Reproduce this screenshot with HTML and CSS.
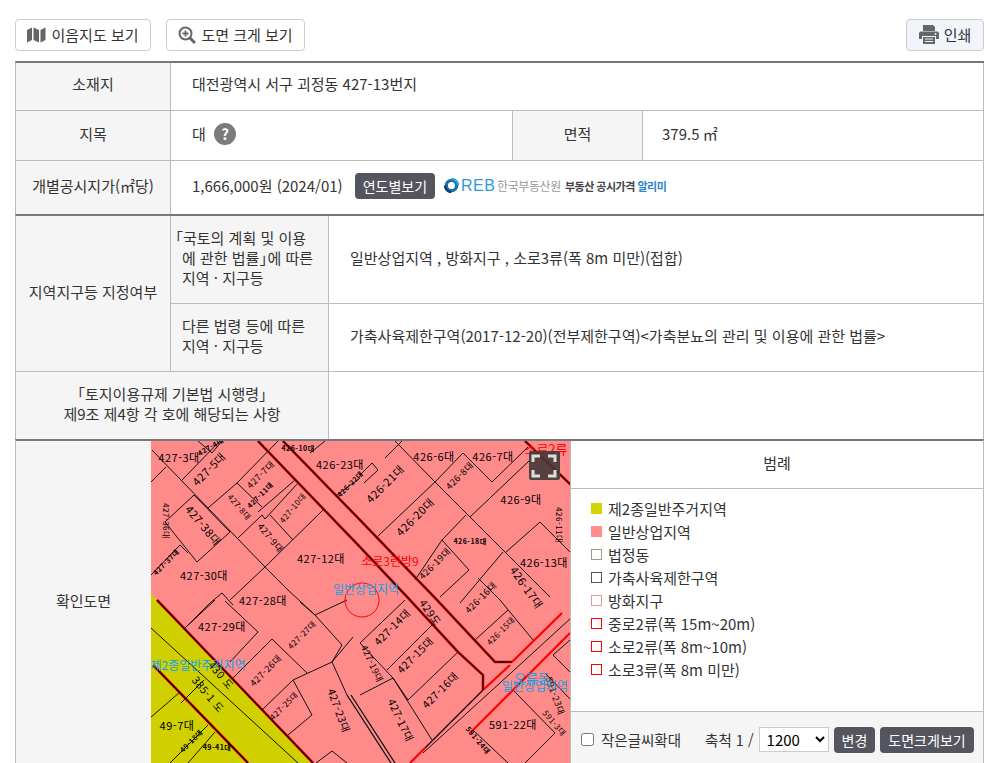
FILE: index.html
```html
<!DOCTYPE html>
<html lang="ko">
<head>
    <meta charset="UTF-8">
    <meta name="viewport" content="width=device-width, initial-scale=1.0">
    <title>토지이용계획 확인</title>
    <link rel="stylesheet" href="styles.css">
</head>
<body>
    <div class="container">
        <div class="toolbar">
            <button class="tool-btn btn-map">
                <svg class="ico" width="19" height="16" viewBox="0 0 19 16"><path d="M0 3 5 0.500V13L0 15.500ZM6.500 0.500 12 3V15.500L6.500 13ZM13.500 3 18.500 0.500V13L13.500 15.500Z" fill="#666"/></svg>
                이음지도 보기
            </button>
            <button class="tool-btn btn-zoom">
                <svg class="ico" width="18" height="18" viewBox="0 0 18 18"><circle cx="7.500" cy="7.500" r="6" fill="none" stroke="#666" stroke-width="2"/><path d="M12 12 17 17" stroke="#666" stroke-width="3"/><path d="M4.500 7.500H10.500M7.500 4.500V10.500" stroke="#666" stroke-width="1.800"/></svg>
                도면 크게 보기
            </button>
            <button class="tool-btn btn-print">
                <svg class="ico" width="20" height="19" viewBox="0 0 20 19"><path d="M4 0H14L16 2V6H4Z" fill="#666"/><path d="M2 6.500H18Q20 6.500 20 8.500V14H17V11H3V14H0V8.500Q0 6.500 2 6.500Z" fill="#666"/><path d="M4 12H16V19H4Z" fill="#666"/><path d="M6 14H14M6 16.500H14" stroke="#eef2f8" stroke-width="1"/><circle cx="16.500" cy="9" r="1" fill="#eef2f8"/></svg>
                인쇄
            </button>
        </div>

        <table class="info-table t-basic">
            <colgroup><col class="c155"><col class="c342"><col class="c130"><col></colgroup>
            <tr class="r48 up">
                <th>소재지</th>
                <td colspan="3">대전광역시 서구 괴정동 427-13번지</td>
            </tr>
            <tr class="r50">
                <th>지목</th>
                <td>대 <span class="help">?</span></td>
                <th>면적</th>
                <td class="area">379.5 ㎡</td>
            </tr>
            <tr class="r53 last">
                <th>개별공시지가(㎡당)</th>
                <td colspan="3">
                    <div class="price-line">
                        <span>1,666,000원 (2024/01)</span>
                        <button class="dark-btn">연도별보기</button>
                        <span class="reb">
                            <svg width="15" height="15" viewBox="0 0 16 16"><circle cx="8" cy="8" r="5.500" fill="none" stroke="#1d6fa8" stroke-width="3.500"/><path d="M8 1A7 7 0 0 1 15 8" fill="none" stroke="#2aa5dc" stroke-width="2.500"/><path d="M1 8A7 7 0 0 0 8 15" fill="none" stroke="#123f73" stroke-width="2.500"/></svg>
                            <span class="reb-mark">REB</span>
                            <span class="reb-name">한국부동산원</span>
                            <span class="reb-title">부동산 공시가격 <em>알리미</em></span>
                        </span>
                    </div>
                </td>
            </tr>
        </table>

        <table class="info-table t-zone">
            <colgroup><col class="c155"><col class="c158"><col></colgroup>
            <tr class="r88">
                <th rowspan="2">지역지구등 지정여부</th>
                <th class="law"><span class="hang">「</span>국토의 계획 및 이용<br>에 관한 법률<span class="hang-end">」</span>에 따른<br>지역 · 지구등</th>
                <td class="zone-val">일반상업지역 , 방화지구 , 소로3류(폭 8m 미만)(접합)</td>
            </tr>
            <tr class="r68">
                <th class="law">다른 법령 등에 따른<br>지역 · 지구등</th>
                <td class="zone-val">가축사육제한구역(2017-12-20)(전부제한구역)&lt;가축분뇨의 관리 및 이용에 관한 법률&gt;</td>
            </tr>
            <tr class="r67 last">
                <th colspan="2">「토지이용규제 기본법 시행령」<br>제9조 제4항 각 호에 해당되는 사항</th>
                <td></td>
            </tr>
        </table>

        <div class="plan">
            <div class="plan-label">확인도면</div>
            <div class="plan-map">
                <svg class="map-svg" width="420" height="322" viewBox="151 441 420 322">
                    <rect x="151" y="441" width="420" height="322" fill="#ff8a8a"/>
                    <polygon points="151,593 157,600 313,763 151,763" fill="#d0d000"/>

                    <!-- parcel lines -->
                    <path class="lot" d="M152 450 265 567 288 590 315 615 342 645M151 482 166 467M182 480 220 441M198 441 212 453 222 441M165 522 194 495 230 532 197 562ZM208 508 237 483 262 507M237 483 278 441M238 538 262 515 265 519 298 483 295 480 258 512M270 515 293 540M265 567 323 510M151 575 180 545 188 553M230 600 265 567M210 603 222 593 233 605M310 453 325 441M337 495 360 478"/>
                    <path class="lot" d="M395 441 435 482 470 517 503 550 550 597M360 475 372 463 378 470 364 483M377 537 435 482 463 453 492 482 528 447M470 517 530 460M415 580 442 540 469 570 440 597M442 540 466 515M460 603 503 552M505 553 540 522 571 553M478 578 500 600M403 440 385 458"/>
                    <path class="lot" d="M360 643 405 600M387 670 432 625M408 700 458 652M360 643 393 678 432 740M360 695 393 678M393 678 408 700M475 640 508 610M500 600 533 640M553 655 570 640M553 655 570 672M423 753 512 672 571 618M513 690 555 733 525 763M473 730 508 763M545 673 571 700"/>
                    <path class="lot" d="M185 628 215 600M185 628 210 603M225 601 258 632 230 662M233 678 272 639 307 673M300 602 315 615M293 680 312 715 288 735M332 662 353 637M342 645 332 662 293 680 262 710M332 662 347 695M315 615 347 600M150 718 180 692M170 763 208 725M188 763 215 732M316 763 332 751 347 763M151 628 298 763M204 680 181 703"/>
                    <path class="hatch" d="M347 695 391 763M351 695 395 763"/>

                    <!-- road edges -->
                    <path class="road-red" d="M512 662 562 613M483 690 510 665M570 633 470 733M425 748 410 763"/>
                    <path class="road-red edge" d="M258 441 360 547 410 600 458 652 483 675V690M283 441 360 520 437 600 495 662H512M157 600 313 763M153 665 248 763M525 441 571 485"/>
                    <path class="road" d="M258 441 360 547 410 600 458 652 483 675V690M283 441 360 520 437 600 495 662H512M157 600 313 763M153 665 248 763M483 690 425 748M525 441 571 485"/>

                    <circle cx="362" cy="600" r="17" fill="none" stroke="#f00" stroke-width="1"/>

                    <!-- parcel labels -->
                    <g class="lbl">
                        <text x="179" y="462">427-3대</text>
                        <text class="s7" transform="translate(212 449) rotate(-30)">427-4대</text>
                        <text transform="translate(212 472) rotate(-45)">427-5대</text>
                        <text class="s9" transform="translate(263 477) rotate(-45)">427-7대</text>
                        <text class="s8" transform="translate(237 509) rotate(50)">427-8대</text>
                        <text transform="translate(200 528) rotate(50)">427-38대</text>
                        <text class="s9" transform="translate(268 540) rotate(50)">427-9대</text>
                        <text class="s8" transform="translate(295 510) rotate(-50)">427-10대</text>
                        <text class="s7" transform="translate(262 497) rotate(-45)">427-11대</text>
                        <text class="s8" transform="translate(163 521) rotate(90)">427-36대</text>
                        <text class="s7" transform="translate(168 564) rotate(-45)">427-37대</text>
                        <text x="321" y="563">427-12대</text>
                        <text x="204" y="580">427-30대</text>
                        <text x="263" y="605">427-28대</text>
                        <text x="222" y="631">427-29대</text>
                        <text class="s9" transform="translate(268 673) rotate(-45)">427-26대</text>
                        <text class="s8" transform="translate(304 637) rotate(-45)">427-27대</text>
                        <text class="s8" transform="translate(286 708) rotate(-45)">427-25대</text>
                        <text class="s11" transform="translate(335 712) rotate(70)">427-23대</text>
                        <text x="177" y="730">49-7대</text>
                        <text class="s11" transform="translate(218 678) rotate(50)">430 도</text>
                        <text class="s11" transform="translate(205 697) rotate(50)">385-1 도</text>
                        <text class="s7" x="217" y="750">49-41대</text>
                        <text class="s7" transform="translate(193 743) rotate(-45)">49-18대</text>
                        <text class="s11" transform="translate(418 658) rotate(-45)">427-15대</text>
                        <text class="s11" transform="translate(395 630) rotate(-45)">427-14대</text>
                        <text class="s11" transform="translate(443 693) rotate(-45)">427-16대</text>
                        <text class="s11" transform="translate(397 722) rotate(65)">427-17대</text>
                        <text class="s9" transform="translate(369 665) rotate(65)">427-19대</text>
                        <text class="s11" transform="translate(427 615) rotate(55)">429도</text>
                        <text x="513" y="729">591-22대</text>
                        <text class="s7" x="298" y="451">426-10대</text>
                        <text class="s7" transform="translate(352 486) rotate(-45)">426-22대</text>
                        <text x="340" y="469">426-23대</text>
                        <text x="434" y="461">426-6대</text>
                        <text x="493" y="461">426-7대</text>
                        <text x="521" y="504">426-9대</text>
                        <text x="544" y="567">426-13대</text>
                        <text transform="translate(388 487) rotate(-45)">426-21대</text>
                        <text class="s9" transform="translate(462 478) rotate(-45)">426-8대</text>
                        <text transform="translate(418 520) rotate(-45)">426-20대</text>
                        <text class="s7" x="470" y="544">426-18대</text>
                        <text class="s9" transform="translate(437 566) rotate(-45)">426-19대</text>
                        <text transform="translate(523 590) rotate(55)">426-17대</text>
                        <text class="s9" transform="translate(483 600) rotate(-45)">426-16대</text>
                        <text class="s8" transform="translate(503 633) rotate(-45)">426-15대</text>
                        <text class="s8" transform="translate(556 525) rotate(90)">426-11대</text>
                        <text class="s8" transform="translate(552 725) rotate(50)">591-3대</text>
                        <text class="s9" transform="translate(552 697) rotate(70)">591-23대</text>
                        <text class="s7" transform="translate(476 742) rotate(50)">591-24대</text>
                    </g>
                    <text class="map-blue" x="366" y="594">일반상업지역</text>
                    <text class="map-red" x="390" y="566">소로3련방9</text>
                    <text class="map-blue" x="198" y="670">제2종일반주거지역</text>
                    <text class="map-blue big" x="532" y="683">오류동</text>
                    <text class="map-blue" x="535" y="691">일반상업지역</text>
                    <text class="map-red big" x="546" y="454">소로2류</text>
                </svg>
                <button class="full-btn" aria-label="전체화면">
                    <svg width="30" height="28" viewBox="0 0 30 28"><path d="M4 10V4H11M19 4H26V10M26 18V24H19M11 24H4V18" fill="none" stroke="#ddd" stroke-width="3"/></svg>
                </button>
            </div>
            <div class="plan-side">
                <div class="legend-title">범례</div>
                <ul class="legend">
                    <li><i class="sw sw-yellow"></i>제2종일반주거지역</li>
                    <li><i class="sw sw-pink"></i>일반상업지역</li>
                    <li><i class="sw sw-tan"></i>법정동</li>
                    <li><i class="sw sw-dark"></i>가축사육제한구역</li>
                    <li><i class="sw sw-rose"></i>방화지구</li>
                    <li><i class="sw sw-red"></i>중로2류(폭 15m~20m)</li>
                    <li><i class="sw sw-red"></i>소로2류(폭 8m~10m)</li>
                    <li><i class="sw sw-red"></i>소로3류(폭 8m 미만)</li>
                </ul>
                <div class="map-bar">
                    <label class="small-text"><input type="checkbox">작은글씨확대</label>
                    <span class="scale">축척 1 /</span>
                    <select class="scale-select"><option>1200</option></select>
                    <button class="dark-btn">변경</button>
                    <button class="dark-btn">도면크게보기</button>
                </div>
            </div>
        </div>
    </div>
</body>
</html>
```
FILE: styles.css
```css
* {
    margin: 0;
    padding: 0;
    box-sizing: border-box;
}

html, body {
    height: 763px;
    overflow: hidden;
}

body {
    font-family: "Noto Sans CJK KR", "Noto Sans", sans-serif;
    font-size: 15px;
    color: #333;
    background-color: #fff;
}

button, select {
    font-family: inherit;
}

.container {
    padding: 19px 9px 0 15px;
}

/* top buttons */
.toolbar {
    display: flex;
    gap: 15px;
    height: 42px;
}

.tool-btn {
    display: flex;
    align-items: center;
    justify-content: center;
    gap: 5px;
    height: 32px;
    padding-bottom: 1px;
    font-size: 15px;
    color: #333;
    background-color: #fff;
    border: 1px solid #ccc;
    border-radius: 4px;
}

.btn-map { width: 136px; }
.btn-zoom { width: 139px; }

.btn-print {
    width: 78px;
    margin-left: auto;
    background-color: #f1f5fb;
}

/* tables */
.info-table {
    width: 969px;
    table-layout: fixed;
    border-collapse: separate;
    border-spacing: 0;
    border-top: 2px solid #777;
    border-left: 1px solid #bbb;
}

.c155 { width: 155px; }
.c342 { width: 342px; }
.c130 { width: 130px; }
.c158 { width: 158px; }

.r48 { height: 48px; }
.r50 { height: 50px; }
.r53 { height: 53px; }
.r88 { height: 88px; }
.r68 { height: 68px; }
.r67 { height: 67px; }

th, td {
    padding-bottom: 4px;
    border-right: 1px solid #bbb;
    border-bottom: 1px solid #bbb;
    line-height: 20px;
}

.up th, .up td {
    padding-bottom: 5px;
}

th {
    font-weight: normal;
    text-align: center;
    background-color: #f5f5f5;
}

td {
    padding-left: 21px;
    background-color: #fff;
}

.last th, .last td {
    border-bottom: none;
}

td.area {
    padding-left: 19px;
}

.help {
    display: inline-block;
    width: 22px;
    height: 22px;
    margin-left: 4px;
    border-radius: 50%;
    background-color: #7b7b7b;
    color: #fff;
    font-weight: bold;
    font-size: 15px;
    line-height: 22px;
    text-align: center;
}

.price-line {
    display: flex;
    align-items: center;
}

.dark-btn {
    height: 26px;
    padding: 0 8px;
    font-size: 14px;
    color: #fff;
    background-color: #55555f;
    border: none;
    border-radius: 4px;
}

.price-line .dark-btn {
    margin-left: 12px;
}

.reb {
    display: flex;
    align-items: center;
    margin-left: 9px;
}

.reb-mark {
    width: 35px;
    margin-left: 2px;
    font-family: "Liberation Sans", sans-serif;
    font-size: 16px;
    line-height: 16px;
    letter-spacing: 0.5px;
    color: #2f9ad8;
}

.reb-name {
    margin-left: 1px;
    font-size: 12px;
    letter-spacing: -0.4px;
    color: #999;
}

.reb-title {
    margin-left: 4px;
    font-size: 11px;
    font-weight: bold;
    letter-spacing: -0.5px;
    color: #444;
}

.reb-title em {
    font-style: normal;
    color: #2d85cf;
}

th.law {
    text-align: left;
    padding-left: 11px;
}

.hang {
    margin-left: -7px;
    margin-right: -7px;
    position: relative;
    left: -7px;
}

.hang-end {
    margin-right: -7px;
}

td.zone-val {
    padding-left: 21px;
}

/* map block */
.plan {
    display: flex;
    width: 969px;
    height: 324px;
    overflow: hidden;
    border-top: 2px solid #777;
    border-left: 1px solid #bbb;
    border-right: 1px solid #bbb;
}

.plan-label {
    display: flex;
    align-items: center;
    justify-content: center;
    flex: none;
    width: 135px;
    padding-bottom: 3px;
    background-color: #f5f5f5;
}

.plan-map {
    position: relative;
    flex: none;
    width: 419px;
    overflow: hidden;
}

.map-svg {
    display: block;
}

.lot {
    fill: none;
    stroke: #111;
    stroke-width: 1;
}

.hatch {
    fill: none;
    stroke: #111;
    stroke-width: 1.3;
}

.road {
    fill: none;
    stroke: #200;
    stroke-width: 1.4;
}

.road-red {
    fill: none;
    stroke: #f00;
    stroke-width: 2.2;
}

.road-red.edge {
    stroke-width: 2.6;
}

.lbl text {
    font-family: "Noto Sans CJK KR", sans-serif;
    font-size: 11px;
    letter-spacing: 0.5px;
    fill: #000;
    text-anchor: middle;
}

.lbl .s11 { font-size: 10.5px; }
.lbl .s9 { font-size: 9px; }
.lbl .s8 { font-size: 8px; }
.lbl .s7 { font-size: 7px; font-weight: bold; }

.map-blue, .map-red {
    font-family: "Noto Sans CJK KR", sans-serif;
    font-size: 12px;
    text-anchor: middle;
}

.map-blue { fill: #0fa0e6; }
.map-red { fill: #f00; }
.big { font-size: 13px; }

.full-btn {
    position: absolute;
    top: 10px;
    left: 378px;
    width: 31px;
    height: 29px;
    background-color: rgba(70, 55, 55, 0.9);
    border: 1px solid #444;
    border-radius: 2px;
}

.full-btn svg {
    display: block;
    margin: -1px;
}

.plan-side {
    display: flex;
    flex-direction: column;
    flex: 1;
    border-left: 1px solid #bbb;
}

.legend-title {
    flex: none;
    height: 48px;
    line-height: 44px;
    text-align: center;
    border-bottom: 1px solid #bbb;
}

.legend {
    flex: none;
    list-style: none;
    height: 222px;
    padding: 8px 0 0 20px;
}

.legend li {
    display: flex;
    align-items: center;
    height: 23px;
}

.sw {
    flex: none;
    width: 11px;
    height: 11px;
    margin-right: 6px;
    border: 1px solid transparent;
}

.sw-yellow { background-color: #d4d400; }
.sw-pink { background-color: #ff8f8f; }
.sw-tan { border-color: #a59a7f; }
.sw-dark { border-color: #555; }
.sw-rose { border-color: #d8a0a0; }
.sw-red { border-color: #f00; }

.map-bar {
    display: flex;
    flex: none;
    align-items: center;
    height: 56px;
    padding-left: 10px;
    background-color: #f5f5f5;
    border-top: 1px solid #bbb;
}

.small-text {
    display: flex;
    align-items: center;
    gap: 7px;
    font-size: 14.5px;
}

.small-text input {
    width: 13px;
    height: 13px;
}

.scale {
    margin-left: 24px;
    font-size: 14.5px;
}

.scale-select {
    width: 70px;
    height: 25px;
    margin-left: 5px;
    padding-left: 3px;
    font-size: 15px;
    background-color: #fff;
    border: 1px solid #ccc;
}

.map-bar .dark-btn {
    margin-left: 5px;
}
```
